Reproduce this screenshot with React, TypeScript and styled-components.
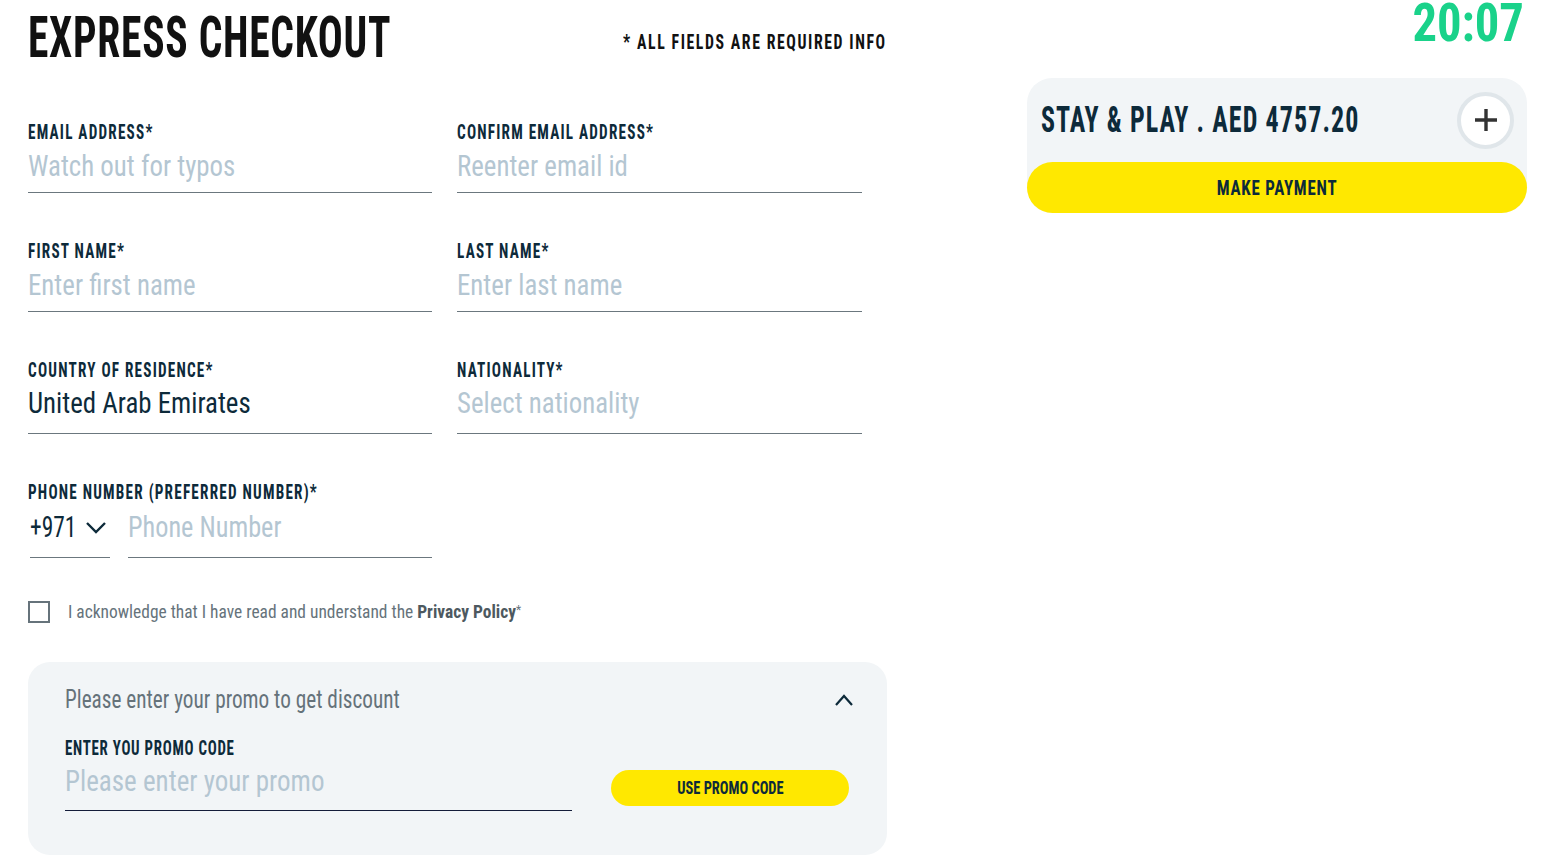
import React from 'react'
import styled, { createGlobalStyle } from 'styled-components'

const FONT = `"Roboto Condensed", Roboto, "Liberation Sans", sans-serif`

const GlobalStyle = createGlobalStyle`
  body {
    margin: 0;
    background: #ffffff;
    font-family: ${FONT};
    color: #0d2a3a;
  }
  * { box-sizing: border-box; }
`

// the original face is narrower than Roboto Condensed, so text gets squeezed a bit more
const Squeeze = styled.span<{ $x: number; $origin?: string }>`
  display: inline-block;
  white-space: nowrap;
  transform: scaleX(${(p) => p.$x});
  transform-origin: ${(p) => p.$origin || 'left'} center;
`

const fields = [
  { label: 'Email address*', placeholder: 'Watch out for typos' },
  { label: 'Confirm email address*', placeholder: 'Reenter email id' },
  { label: 'First name*', placeholder: 'Enter first name' },
  { label: 'Last name*', placeholder: 'Enter last name' },
  { label: 'Country of residence*', value: 'United Arab Emirates', select: true },
  { label: 'Nationality*', placeholder: 'Select nationality', select: true },
]

const App: React.FC = () => (
  <>
    <GlobalStyle />
    <StyledPage>
      <StyledMain>
        <StyledHeader>
          <StyledTitle>
            <Squeeze $x={0.716}>Express Checkout</Squeeze>
          </StyledTitle>
          <StyledRequired>
            <Squeeze $x={0.79} $origin='right'>* All fields are required info</Squeeze>
          </StyledRequired>
        </StyledHeader>

        <StyledGrid>
          {fields.map((f) => (
            <StyledField key={f.label}>
              <StyledLabel>
                <Squeeze $x={0.76}>{f.label}</Squeeze>
              </StyledLabel>
              <StyledInput $tall={f.select} $filled={!!f.value}>
                <Squeeze $x={0.895}>{f.value || f.placeholder}</Squeeze>
              </StyledInput>
            </StyledField>
          ))}
          <StyledField>
            <StyledLabel>
              <Squeeze $x={0.76}>Phone number (preferred number)*</Squeeze>
            </StyledLabel>
            <StyledPhoneRow>
              <StyledCode>
                <StyledCodeText>
                  <Squeeze $x={0.78}>+971</Squeeze>
                </StyledCodeText>
                <svg width='22' height='22' viewBox='0 0 22 22' fill='none' stroke='#0d2a3a' strokeWidth='2.4'>
                  <path d='M2 6l9 9 9-9' />
                </svg>
              </StyledCode>
              <StyledPhoneInput>
                <Squeeze $x={0.875}>Phone Number</Squeeze>
              </StyledPhoneInput>
            </StyledPhoneRow>
          </StyledField>
        </StyledGrid>

        <StyledConsent>
          <StyledCheckbox />
          <Squeeze $x={0.917}>
            I acknowledge that I have read and understand the <b>Privacy Policy</b>
            <sup>*</sup>
          </Squeeze>
        </StyledConsent>

        <StyledPromo>
          <StyledPromoHead>
            <Squeeze $x={0.85}>Please enter your promo to get discount</Squeeze>
            <svg width='20' height='14' viewBox='0 0 20 14' fill='none' stroke='#0d2a3a' strokeWidth='2.2'>
              <path d='M2 12l8-9 8 9' />
            </svg>
          </StyledPromoHead>
          <StyledPromoLabel>
            <Squeeze $x={0.745}>Enter you promo code</Squeeze>
          </StyledPromoLabel>
          <StyledPromoRow>
            <StyledPromoInput>
              <Squeeze $x={0.9}>Please enter your promo</Squeeze>
            </StyledPromoInput>
            <StyledPromoButton>
              <Squeeze $x={0.8} $origin='center'>Use promo code</Squeeze>
            </StyledPromoButton>
          </StyledPromoRow>
        </StyledPromo>
      </StyledMain>

      <StyledAside>
        <StyledTimer>
          <Squeeze $x={0.9} $origin='right'>20:07</Squeeze>
        </StyledTimer>
        <StyledSummary>
          <StyledSummaryRow>
            <StyledSummaryTitle>
              <Squeeze $x={0.722}>Stay &amp; Play . AED 4757.20</Squeeze>
            </StyledSummaryTitle>
            <StyledPlus>
              <svg width='26' height='26' viewBox='0 0 26 26' stroke='#333' strokeWidth='3.4'>
                <path d='M13 2v22M2 13h22' />
              </svg>
            </StyledPlus>
          </StyledSummaryRow>
          <StyledPayButton>
            <Squeeze $x={0.805} $origin='center'>Make payment</Squeeze>
          </StyledPayButton>
        </StyledSummary>
      </StyledAside>
    </StyledPage>
  </>
)

const StyledPage = styled.div`
  display: flex;
  justify-content: space-between;
  padding: 0 18px 0 28px;
  width: 1545px;
`

const StyledMain = styled.div`
  width: 859px;
  flex-shrink: 0;
`

const StyledHeader = styled.div`
  display: flex;
  justify-content: space-between;
  align-items: flex-start;
  height: 123px;
  padding-top: 8px;
`

const StyledTitle = styled.h1`
  margin: 0;
  min-width: 0;
  font-size: 58px;
  line-height: 58px;
  font-weight: 700;
  text-transform: uppercase;
  letter-spacing: 1px;
  color: #111;
`

const StyledRequired = styled.div`
  margin-top: 22px;
  font-size: 20px;
  font-weight: 700;
  text-transform: uppercase;
  letter-spacing: 2px;
  color: #111;
`

const StyledGrid = styled.div`
  display: grid;
  grid-template-columns: 404px 405px;
  column-gap: 25px;
  row-gap: 49px;
`

const StyledField = styled.div`
  display: flex;
  flex-direction: column;
`

const StyledLabel = styled.label`
  font-size: 20px;
  line-height: 18px;
  font-weight: 700;
  text-transform: uppercase;
  letter-spacing: 1.6px;
  color: #0d2a3a;
  margin-bottom: 9px;
`

const StyledInput = styled.div<{ $tall?: boolean; $filled?: boolean }>`
  height: ${(p) => (p.$tall ? '46px' : '43px')};
  font-size: 30px;
  line-height: ${(p) => (p.$tall ? '30px' : '32px')};
  color: ${(p) => (p.$filled ? '#0d2a3a' : '#b4c6d2')};
  border-bottom: 1px solid #6b777e;
`

const StyledPhoneRow = styled.div`
  display: flex;
  gap: 18px;
`

const StyledPhoneInput = styled(StyledInput)`
  flex: 1;
  height: 48px;
  line-height: 34px;
`

const StyledCode = styled.div`
  width: 80px;
  margin-left: 2px;
  height: 48px;
  display: flex;
  align-items: flex-start;
  gap: 9px;
  font-size: 30px;
  line-height: 34px;
  color: #0d2a3a;
  border-bottom: 1px solid #6b777e;

  svg {
    flex-shrink: 0;
    margin-top: 7px;
  }
`

const StyledCodeText = styled.span`
  width: 46px;
`

const StyledConsent = styled.div`
  display: flex;
  align-items: center;
  gap: 18px;
  margin-top: 42px;
  font-size: 19px;
  color: #66737b;

  b {
    color: #4d5960;
  }

  sup {
    font-size: 13px;
    vertical-align: 4px;
  }
`

const StyledCheckbox = styled.span`
  width: 22px;
  height: 22px;
  border: 2px solid #66737b;
  flex-shrink: 0;
`

const StyledPromo = styled.div`
  margin-top: 39px;
  height: 193px;
  background: #f2f5f7;
  border-radius: 22px;
  padding: 23px 33px 0 37px;
`

const StyledPromoHead = styled.div`
  display: flex;
  justify-content: space-between;
  align-items: center;
  font-size: 25px;
  font-weight: 400;
  color: #65727a;
`

const StyledPromoLabel = styled.div`
  margin-top: 22px;
  font-size: 20px;
  font-weight: 700;
  text-transform: uppercase;
  letter-spacing: 1px;
  color: #0d2a3a;
`

const StyledPromoRow = styled.div`
  display: flex;
  align-items: center;
  gap: 39px;
`

const StyledPromoInput = styled.div`
  width: 507px;
  height: 51px;
  font-size: 30px;
  line-height: 42px;
  color: #b4c6d2;
  border-bottom: 1px solid #141c3a;
`

const StyledPromoButton = styled.button`
  width: 238px;
  height: 36px;
  margin-top: 4px;
  border: 0;
  border-radius: 18px;
  background: #ffe800;
  font-family: ${FONT};
  font-size: 18px;
  font-weight: 700;
  text-transform: uppercase;
  color: #0d2a3a;
`

const StyledAside = styled.div`
  width: 500px;
  flex-shrink: 0;
  display: flex;
  flex-direction: column;
  align-items: flex-end;
`

const StyledTimer = styled.div`
  height: 78px;
  padding-right: 3px;
  font-size: 54px;
  line-height: 46px;
  font-weight: 700;
  color: #1ad28a;
`

const StyledSummary = styled.div`
  width: 500px;
  background: #f2f5f7;
  border-radius: 25px;
`

const StyledSummaryRow = styled.div`
  display: flex;
  justify-content: space-between;
  align-items: center;
  height: 84px;
  padding: 0 13px 0 14px;
`

const StyledSummaryTitle = styled.div`
  flex: 1;
  min-width: 0;
  font-size: 36px;
  font-weight: 700;
  text-transform: uppercase;
  letter-spacing: 1.5px;
  color: #0d2a3a;
`

const StyledPlus = styled.span`
  width: 57px;
  height: 57px;
  flex-shrink: 0;
  border-radius: 50%;
  border: 4px solid #e0e6ea;
  background: #fff;
  display: flex;
  align-items: center;
  justify-content: center;
`

const StyledPayButton = styled.button`
  width: 100%;
  height: 51px;
  border: 0;
  border-radius: 26px;
  background: #ffe800;
  font-family: ${FONT};
  font-size: 21px;
  font-weight: 700;
  text-transform: uppercase;
  letter-spacing: 1px;
  color: #0d2a3a;
`

export default App
